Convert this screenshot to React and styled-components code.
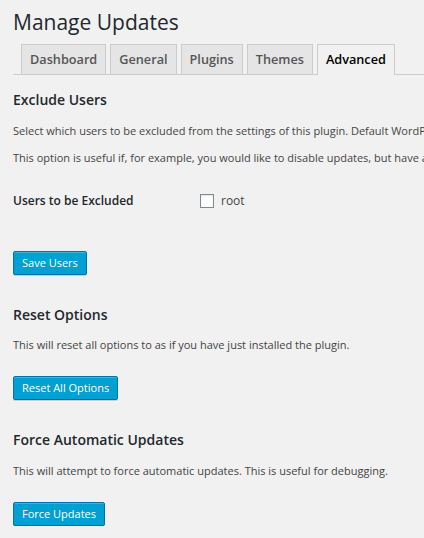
import React from "react"
import styled, { createGlobalStyle } from "styled-components"

const Global = createGlobalStyle`
  html, body {
    margin: 0;
    padding: 0;
    background: #f1f1f1;
  }
  body {
    font-family: "Open Sans", sans-serif;
    color: #444;
    font-size: 12px;
    overflow: hidden;
  }
`

const Wrap = styled.div`
  padding: 0 0 0 13px;
  overflow: hidden;
`

const Title = styled.h1`
  margin: 0;
  padding: 8px 0 0;
  font-size: 21px;
  font-weight: 400;
  line-height: 28px;
  color: #23282d;
`

const TabBar = styled.div`
  display: flex;
  margin-top: 8px;
  padding-left: 8px;
  gap: 4px;
  border-bottom: 1px solid #ccc;
`

const Tab = styled.div`
  padding: 0 8px;
  line-height: 29px;
  font-size: 12.7px;
  font-weight: 600;
  border: 1px solid #ccc;
  border-bottom: none;
  background: ${(p) => (p.$active ? "#f1f1f1" : "#e5e5e5")};
  color: ${(p) => (p.$active ? "#000" : "#555")};
  margin-bottom: ${(p) => (p.$active ? "-1px" : "0")};
  height: ${(p) => (p.$active ? "30px" : "29px")};
`

const Section = styled.section`
  padding-top: ${(p) => p.$top || 0}px;
`

const Heading = styled.h3`
  margin: 0;
  font-size: 14px;
  font-weight: 600;
  line-height: 20px;
  color: #23282d;
`

const Text = styled.p`
  margin: 0;
  padding-top: ${(p) => p.$top || 0}px;
  font-size: 11px;
  line-height: 18px;
  white-space: nowrap;
`

const FieldRow = styled.div`
  display: flex;
  align-items: center;
  padding-top: 25px;
`

const Label = styled.div`
  width: 187px;
  font-size: 12px;
  font-weight: 600;
  color: #23282d;
`

const Check = styled.label`
  display: flex;
  align-items: center;
  gap: 7px;
  font-size: 12px;
  color: #444;
`

const Box = styled.span`
  width: 12px;
  height: 12px;
  border: 1px solid #7e8993;
  background: #fff;
  box-shadow: inset 0 1px 2px rgba(0, 0, 0, 0.1);
`

const Button = styled.button`
  display: block;
  margin-top: ${(p) => p.$top || 0}px;
  height: 24px;
  padding: 0 8px 1px;
  font-family: "Open Sans", sans-serif;
  font-size: 11px;
  color: #fff;
  background: #00a0d2;
  border: 1px solid #0073aa;
  border-radius: 2px;
  box-shadow: inset 0 1px 0 rgba(120, 200, 230, 0.5), 0 1px 0 rgba(0, 0, 0, 0.15);
  cursor: pointer;
`

export default function App() {
  return (
    <Wrap>
      <Global />
      <Title>Manage Updates</Title>
      <TabBar>
        <Tab>Dashboard</Tab>
        <Tab>General</Tab>
        <Tab>Plugins</Tab>
        <Tab>Themes</Tab>
        <Tab $active>Advanced</Tab>
      </TabBar>

      <Section $top={15}>
        <Heading>Exclude Users</Heading>
        <Text $top={12}>
          Select which users to be excluded from the settings of this plugin. Default WordPress behaviour will be used for them.
        </Text>
        <Text $top={9}>
          This option is useful if, for example, you would like to disable updates, but have a different user still receive them.
        </Text>
        <FieldRow>
          <Label>Users to be Excluded</Label>
          <Check>
            <Box />
            root
          </Check>
        </FieldRow>
        <Button $top={42}>Save Users</Button>
      </Section>

      <Section $top={30}>
        <Heading>Reset Options</Heading>
        <Text $top={11}>This will reset all options to as if you have just installed the plugin.</Text>
        <Button $top={22}>Reset All Options</Button>
      </Section>

      <Section $top={30}>
        <Heading>Force Automatic Updates</Heading>
        <Text $top={12}>This will attempt to force automatic updates. This is useful for debugging.</Text>
        <Button $top={22}>Force Updates</Button>
      </Section>
    </Wrap>
  )
}
